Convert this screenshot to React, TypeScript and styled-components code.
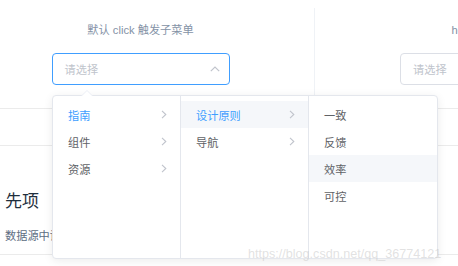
import React from "react";
import styled, { createGlobalStyle } from "styled-components";

const Global = createGlobalStyle`
  html, body { margin: 0; padding: 0; background: #fff; }
  body {
    font-family: "Liberation Sans", "Noto Sans CJK SC", sans-serif;
    width: 458px; height: 266px; overflow: hidden;
  }
`;

const Page = styled.div`
  position: relative;
  width: 458px;
  height: 266px;
  overflow: hidden;
`;

const Source = styled.div`
  display: flex;
  margin-left: -33px;
  height: 108px;
`;

const Block = styled.div<{ $divider?: boolean; $w: number }>`
  box-sizing: border-box;
  flex-shrink: 0;
  width: ${(p) => p.$w}px;
  margin-top: 8px;
  height: 100px;
  padding-top: 15px;
  display: flex;
  flex-direction: column;
  align-items: center;
  border-right: ${(p) => (p.$divider ? "1px solid #eff2f6" : "none")};
`;

const Demonstration = styled.span`
  display: block;
  font-size: 11.2px;
  line-height: 14px;
  color: #8492a6;
  margin-bottom: 16px;
  white-space: nowrap;
`;

const Input = styled.div<{ $focus?: boolean; $shift?: number }>`
  box-sizing: border-box;
  width: 178px;
  height: 32px;
  margin-left: ${(p) => p.$shift ?? 0}px;
  border: 1px solid ${(p) => (p.$focus ? "#409eff" : "#dcdfe6")};
  border-radius: 4px;
  display: flex;
  align-items: center;
  justify-content: space-between;
  padding: 0 9px 0 12px;
  font-size: 11.2px;
  color: #c0c4cc;
`;

const ControlBar = styled.div`
  height: 36px;
  border-top: 1px solid #ebebeb;
  border-bottom: 1px solid #ebebeb;
`;

const Heading = styled.h3`
  margin: 44px 0 0 5px;
  font-size: 17px;
  line-height: 24px;
  font-weight: 400;
  color: #1f2f3d;
  white-space: nowrap;
`;

const Para = styled.p`
  margin: 14px 0 0 5px;
  font-size: 11.2px;
  line-height: 16px;
  color: #5e6d82;
  white-space: nowrap;
`;

const Rule = styled.div`
  margin-top: 10px;
  border-top: 1px solid #ebebeb;
`;

const Panel = styled.div`
  position: absolute;
  left: 52px;
  top: 95px;
  height: 164px;
  box-sizing: border-box;
  display: flex;
  background: #fff;
  border: 1px solid #e4e7ed;
  border-radius: 4px;
  box-shadow: 0 2px 10px 0 rgba(0, 0, 0, 0.08);
`;

const PopArrow = styled.div`
  position: absolute;
  left: 28px;
  top: -6px;
  width: 0;
  height: 0;
  border-left: 6px solid transparent;
  border-right: 6px solid transparent;
  border-bottom: 6px solid #ebeef5;
  &::after {
    content: "";
    position: absolute;
    left: -5px;
    top: 1px;
    border-left: 5px solid transparent;
    border-right: 5px solid transparent;
    border-bottom: 5px solid #fff;
  }
`;

const Menu = styled.ul<{ $last?: boolean }>`
  list-style: none;
  margin: 0;
  padding: 5px 0;
  box-sizing: border-box;
  width: 128px;
  border-right: ${(p) => (p.$last ? "none" : "1px solid #e4e7ed")};
`;

const Node = styled.li<{ $active?: boolean; $hover?: boolean }>`
  height: 27px;
  display: flex;
  align-items: center;
  justify-content: space-between;
  padding: 0 13px 0 15px;
  font-size: 11.2px;
  color: ${(p) => (p.$active ? "#409eff" : "#606266")};
  background: ${(p) => (p.$hover ? "#f5f7fa" : "transparent")};
  white-space: nowrap;
`;

const Watermark = styled.div`
  position: absolute;
  left: 248px;
  top: 246px;
  font-family: "Liberation Sans", Arial, sans-serif;
  font-size: 12.6px;
  line-height: 16px;
  color: rgba(190, 190, 190, 0.45);
  white-space: nowrap;
`;

const ChevronRight = () => (
  <svg width="6" height="9" viewBox="0 0 6 9">
    <polyline points="1,0.8 4.8,4.5 1,8.2" fill="none" stroke="#c0c4cc" strokeWidth="1.1" />
  </svg>
);

const ChevronUp = () => (
  <svg width="10" height="6" viewBox="0 0 10 6">
    <polyline points="0.8,5.2 5,1 9.2,5.2" fill="none" stroke="#c0c4cc" strokeWidth="1.2" />
  </svg>
);

type Item = { label: string; arrow?: boolean; active?: boolean; hover?: boolean };

const columns: Item[][] = [
  [
    { label: "指南", arrow: true, active: true },
    { label: "组件", arrow: true },
    { label: "资源", arrow: true },
  ],
  [
    { label: "设计原则", arrow: true, active: true, hover: true },
    { label: "导航", arrow: true },
  ],
  [
    { label: "一致" },
    { label: "反馈" },
    { label: "效率", hover: true },
    { label: "可控" },
  ],
];

export default function App() {
  return (
    <Page>
      <Global />
      <Source>
        <Block $divider $w={348}>
          <Demonstration>默认 click 触发子菜单</Demonstration>
          <Input $focus>
            <span>请选择</span>
            <ChevronUp />
          </Input>
        </Block>
        <Block $w={360}>
          <Demonstration>hover 触发子菜单</Demonstration>
          <Input $shift={-12}>
            <span>请选择</span>
            <ChevronUp />
          </Input>
        </Block>
      </Source>
      <ControlBar />
      <Heading>先项</Heading>
      <Para>数据源中设置 disabled 字段来声明该选项是禁用的</Para>
      <Rule />
      <Panel>
        <PopArrow />
        {columns.map((col, i) => (
          <Menu key={i} $last={i === columns.length - 1}>
            {col.map((it) => (
              <Node key={it.label} $active={it.active} $hover={it.hover}>
                <span>{it.label}</span>
                {it.arrow && <ChevronRight />}
              </Node>
            ))}
          </Menu>
        ))}
      </Panel>
      <Watermark>https://blog.csdn.net/qq_36774121</Watermark>
    </Page>
  );
}
